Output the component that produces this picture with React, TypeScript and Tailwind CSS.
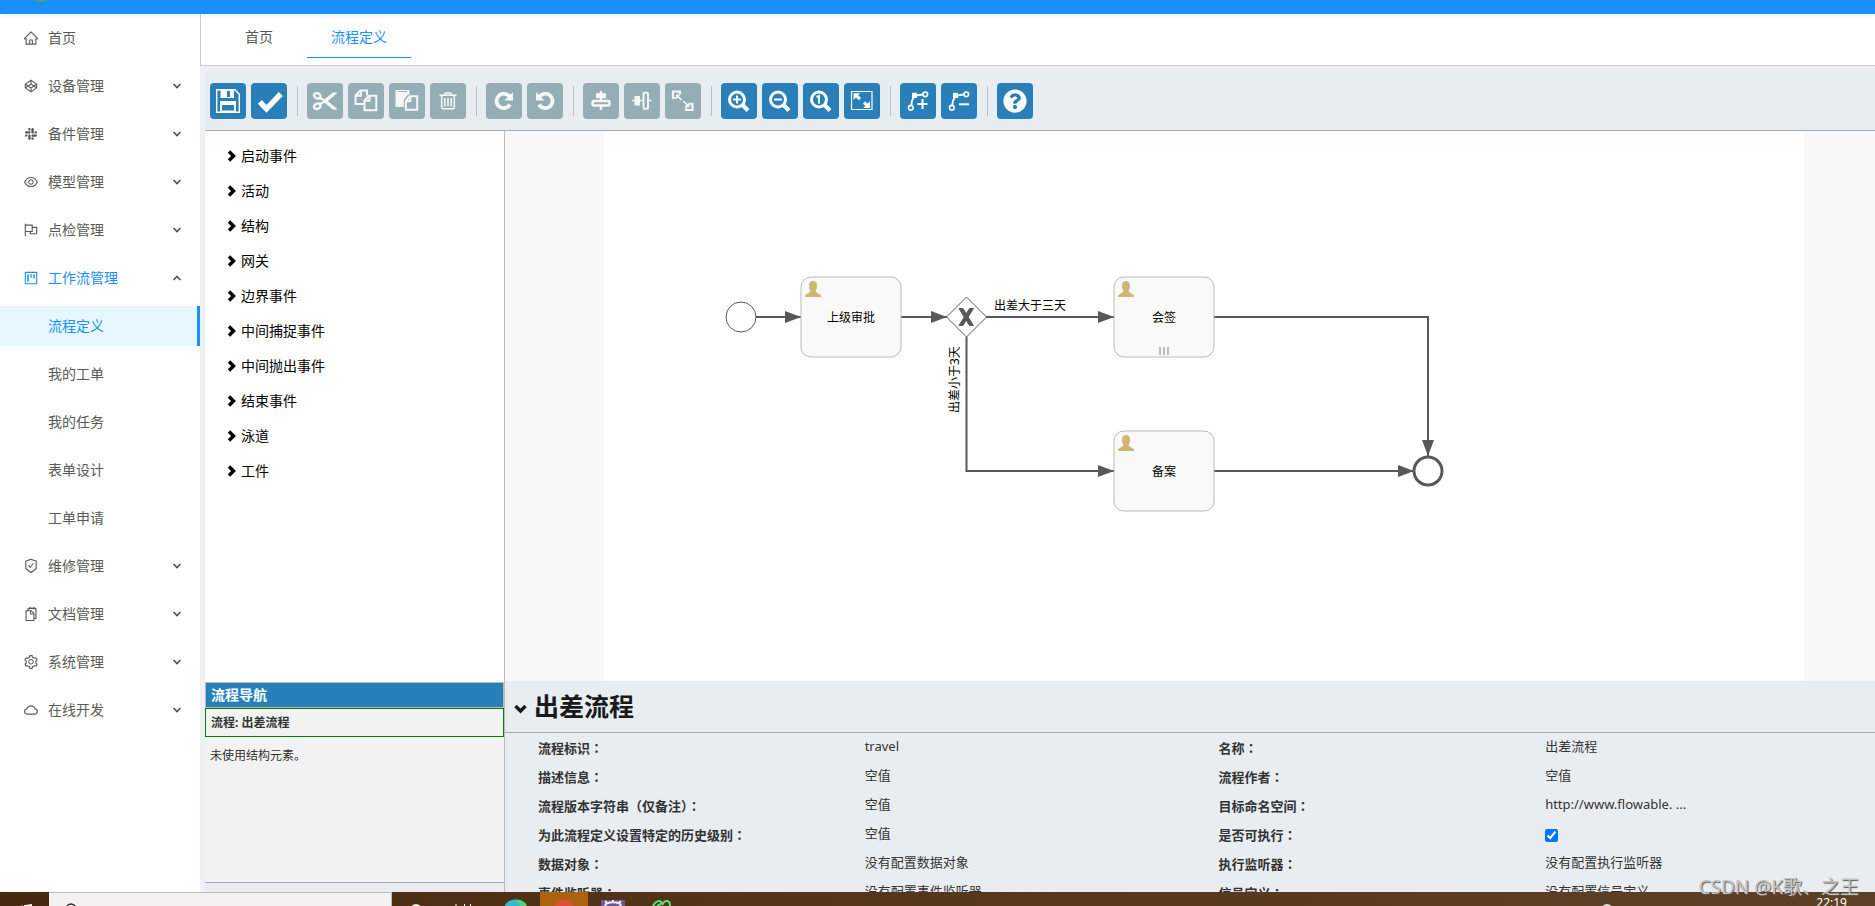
import { ReactNode, useState } from 'react'
import {
  AiOutlineCloud,
  AiOutlineCodepen,
  AiOutlineEye,
  AiOutlineFlag,
  AiOutlineHome,
  AiOutlineProject,
  AiOutlineSafetyCertificate,
  AiOutlineSetting,
  AiOutlineSlack,
  AiOutlineSnippets,
} from 'react-icons/ai'
import { FaQuestionCircle } from 'react-icons/fa'

type MenuItem = {
  label: string
  icon: ReactNode
  children?: string[]
  expandable?: boolean
}

const menu: MenuItem[] = [
  { label: '首页', icon: <AiOutlineHome size={16} /> },
  { label: '设备管理', icon: <AiOutlineCodepen size={16} />, expandable: true },
  { label: '备件管理', icon: <AiOutlineSlack size={16} />, expandable: true },
  { label: '模型管理', icon: <AiOutlineEye size={16} />, expandable: true },
  { label: '点检管理', icon: <AiOutlineFlag size={16} />, expandable: true },
  {
    label: '工作流管理',
    icon: <AiOutlineProject size={16} />,
    expandable: true,
    children: ['流程定义', '我的工单', '我的任务', '表单设计', '工单申请'],
  },
  { label: '维修管理', icon: <AiOutlineSafetyCertificate size={16} />, expandable: true },
  { label: '文档管理', icon: <AiOutlineSnippets size={16} />, expandable: true },
  { label: '系统管理', icon: <AiOutlineSetting size={16} />, expandable: true },
  { label: '在线开发', icon: <AiOutlineCloud size={16} />, expandable: true },
]

const paletteGroups = [
  '启动事件',
  '活动',
  '结构',
  '网关',
  '边界事件',
  '中间捕捉事件',
  '中间抛出事件',
  '结束事件',
  '泳道',
  '工件',
]

const properties = [
  ['流程标识', 'travel'],
  ['名称', '出差流程'],
  ['描述信息', '空值'],
  ['流程作者', '空值'],
  ['流程版本字符串（仅备注）', '空值'],
  ['目标命名空间', 'http://www.flowable. ...'],
  ['为此流程定义设置特定的历史级别', '空值'],
  ['是否可执行', true],
  ['数据对象', '没有配置数据对象'],
  ['执行监听器', '没有配置执行监听器'],
  ['事件监听器', '没有配置事件监听器'],
  ['信号定义', '没有配置信号定义'],
] as const

function MenuArrow({ open }: { open: boolean }) {
  return (
    <svg width="10" height="10" viewBox="0 0 10 10" className="text-[#555]" aria-hidden="true">
      <path d={open ? 'M1.5 7 5 3.5 8.5 7' : 'M1.5 3 5 6.5 8.5 3'} fill="none" stroke="currentColor" strokeWidth="1.7" />
    </svg>
  )
}

function Sidebar() {
  const [selected, setSelected] = useState('流程定义')

  return (
    <nav className="w-[200px] shrink-0 overflow-hidden bg-white pt-1 text-sm text-[#595959]">
      <ul className="flex flex-col gap-2">
        {menu.map(item => (
          <li key={item.label}>
            <button
              className={`flex h-10 w-full items-center gap-[9px] pr-[18px] pl-[23px] text-left ${item.children ? 'text-[#1890ff]' : ''}`}
            >
              {item.icon}
              <span className="flex-1">{item.label}</span>
              {item.expandable && <MenuArrow open={!!item.children} />}
            </button>
            {item.children && (
              <ul className="mt-2 flex flex-col gap-2">
                {item.children.map(child => (
                  <li key={child}>
                    <button
                      onClick={() => setSelected(child)}
                      className={`flex h-10 w-full items-center border-r-3 pl-12 ${
                        selected === child ? 'border-[#1890ff] bg-[#e6f7ff] text-[#1890ff]' : 'border-transparent'
                      }`}
                    >
                      {child}
                    </button>
                  </li>
                ))}
              </ul>
            )}
          </li>
        ))}
      </ul>
    </nav>
  )
}

function Tabs() {
  return (
    <div role="tablist" className="flex h-[52px] shrink-0 gap-2.5 border-b border-l border-[#ccc] bg-white pl-5 text-sm">
      <button role="tab" aria-selected="false" className="h-11 px-6 pt-0.5 text-[#595959]">
        首页
      </button>
      <button role="tab" aria-selected="true" className="h-11 border-b border-[#1890ff] px-6 pt-0.5 text-[#1890ff]">
        流程定义
      </button>
    </div>
  )
}

/* Toolbar drawings, all on a 36px square */

const magnifier = (
  <>
    <circle cx="16" cy="16.5" r="7.5" strokeWidth="3" />
    <path d="m21.5 22 5.5 5.5" strokeWidth="4" />
  </>
)

const redoArrow = (
  <>
    <path d="M23.8 14A7.2 7.2 0 1 0 24 21.5" strokeWidth="3.8" />
    <path d="M27 9v8.5h-8.5z" fill="currentColor" stroke="none" />
  </>
)

const flowLine = (
  <>
    <circle cx="10.8" cy="24.7" r="2.3" />
    <circle cx="25.3" cy="11.3" r="2.3" />
    <path d="m16 12.6 7-1M11.2 22.4c.2-4 1.2-6.600 3.300-9.400" strokeWidth="2" />
    <path d="M12 9.800h5v5.200h-5z" fill="currentColor" stroke="none" />
  </>
)

type Tool = { name: string; icon: ReactNode; disabled?: boolean }

const toolGroups: Tool[][] = [
  [
    {
      name: '保存',
      icon: (
        <>
          <path d="M6.700 6.700H25l4.300 4.600v18H6.700z" strokeWidth="1.400" />
          <path d="M10.500 6.500H24V15H10.500zM17 8v6h3V8zM10 18h16v11H10zM12 22v5.500h12V22z" fill="currentColor" fillRule="evenodd" stroke="none" />
        </>
      ),
    },
    { name: '校验', icon: <path d="m8.800 18.800 6.700 7L29.800 11" strokeWidth="5.400" /> },
  ],
  [
    {
      name: '剪切',
      disabled: true,
      icon: (
        <>
          <ellipse cx="10.300" cy="12.800" rx="3.400" ry="2.600" transform="rotate(25 10.300 12.800)" strokeWidth="2.400" />
          <ellipse cx="10.300" cy="23.200" rx="3.400" ry="2.600" transform="rotate(-25 10.300 23.200)" strokeWidth="2.400" />
          <path d="m12.500 13.600 5 2.600L26 9.500q3-1 4 .8L20.800 18l9.200 7.700q-1 1.800-4 .8l-8.500-6.700-5 2.600-1-2.200 5-2.200-5-2.200z" fill="currentColor" stroke="none" />
        </>
      ),
    },
    {
      name: '复制',
      disabled: true,
      icon: (
        <g strokeWidth="2">
          <path d="M15.500 21H7.500v-8.500L12.500 7.500H19v5M12.800 7.500v5.300H7.500" />
          <path d="M16.500 17.500 21 12.800h7.300v14.400H16.500zM21.500 12.800v5h-5" />
        </g>
      ),
    },
    {
      name: '粘贴',
      disabled: true,
      icon: (
        <>
          <path d="M6.500 7H20.500v4.500H19L14.800 16.500V24H6.500z" fill="currentColor" stroke="none" />
          <path d="M9.500 8.500h8.500" stroke="#95adb4" strokeWidth="1" />
          <path d="M16.800 18 20.800 13.300h7.400v13.400H16.800zM21.300 13.300v5h-4.500" strokeWidth="2" />
        </>
      ),
    },
    {
      name: '删除',
      disabled: true,
      icon: (
        <>
          <path d="M9.500 12.300h17M14.500 12l1-2h5l1 2" />
          <path d="M11.700 12.500v11.300q0 2 2 2h8.600q2 0 2-2V12.500M14.800 15v8.500M18 15v8.500M21.200 15v8.500" />
        </>
      ),
    },
  ],
  [
    { name: '重做', disabled: true, icon: redoArrow },
    { name: '撤销', disabled: true, icon: <g transform="matrix(-1 0 0 1 36 0)">{redoArrow}</g> },
  ],
  [
    {
      name: '垂直对齐',
      disabled: true,
      icon: (
        <>
          <path d="M13 10.200h10V15.200H13z" fill="currentColor" stroke="none" />
          <path d="M18 8v9M18 23v4" strokeWidth="2.400" />
          <rect x="9.500" y="18" width="17" height="4.500" rx="1" strokeWidth="2.400" />
        </>
      ),
    },
    {
      name: '水平对齐',
      disabled: true,
      icon: (
        <>
          <path d="M10.500 13H16v9.500h-5.500z" fill="currentColor" stroke="none" />
          <path d="M8 17.500h10.500M25 17.500h2.500" strokeWidth="1.600" />
          <rect x="19.500" y="9.700" width="4.500" height="16" rx="1" strokeWidth="2" />
        </>
      ),
    },
    {
      name: '相同大小',
      disabled: true,
      icon: (
        <>
          <path d="M10.500 15H8V8.500h7V11M25 20.800h2.500V27h-6.500v-2.500" strokeWidth="2.200" />
          <path d="m12.500 13 4 3.800M18 18l4.500 4" strokeWidth="1.600" />
          <path d="M11 11.500h4.800L11 16.300zM24.500 19v5.300h-5.300z" fill="currentColor" stroke="none" />
        </>
      ),
    },
  ],
  [
    { name: '放大', icon: <>{magnifier}<path d="M12 16.500h8M16 12.500v8" strokeWidth="2" /></> },
    { name: '缩小', icon: <>{magnifier}<path d="M12 16.500h8" strokeWidth="2" /></> },
    { name: '实际大小', icon: <>{magnifier}<path d="m13.500 14 2.500-1v7.500" strokeWidth="2" /></> },
    {
      name: '适应窗口',
      icon: (
        <>
          <path d="M7.500 8.500h20.500v18H7.500z" strokeWidth="1.200" />
          <path d="m12 12.500 4 3.500M20 19.500l4 3.500" strokeWidth="3" />
          <path d="M9.500 10.300h6.700L9.500 17zM26 25v-6.700L19.300 25z" fill="currentColor" stroke="none" />
        </>
      ),
    },
  ],
  [
    { name: '添加拐点', icon: <>{flowLine}<path d="M17.500 21h10M22.500 16v10" strokeWidth="2" /></> },
    { name: '移除拐点', icon: <>{flowLine}<path d="M18 21.300h10" strokeWidth="2" /></> },
  ],
  [{ name: '帮助', icon: <FaQuestionCircle x="6" y="6" size={24} stroke="none" /> }],
]

function Toolbar() {
  return (
    <div className="flex shrink-0 flex-wrap items-center gap-[5px] border-b border-[#a4acb9] bg-[#e8edf1] px-[5px] pt-3 pb-[11px]">
      {toolGroups.map((group, i) => (
        <div key={i} className="flex items-center gap-[5px]">
          {i > 0 && <span className="mr-1 ml-[5px] h-[30px] w-px bg-[#b9c0c9]" />}
          {group.map(tool => (
            <button
              key={tool.name}
              aria-label={tool.name}
              disabled={tool.disabled}
              className={`size-9 rounded ${tool.disabled ? 'bg-[#95adb4] text-white/90' : 'bg-[#2980b9] text-white'}`}
            >
              <svg width="36" height="36" viewBox="0 0 36 36" fill="none" stroke="currentColor" strokeWidth="1.600">
                {tool.icon}
              </svg>
            </button>
          ))}
        </div>
      ))}
    </div>
  )
}

function Palette() {
  return (
    <ul className="min-h-0 flex-1 overflow-hidden bg-white pt-[7px] text-sm text-black">
      {paletteGroups.map(group => (
        <li key={group}>
          <button className="flex h-[35px] w-full items-center gap-1 pl-[22px] text-left">
            <svg width="10" height="12" viewBox="0 0 10 12" aria-hidden="true">
              <path d="m2 1.500 4.500 4.500L2 10.500" fill="none" stroke="currentColor" strokeWidth="3.400" />
            </svg>
            {group}
          </button>
        </li>
      ))}
    </ul>
  )
}

function ProcessNavigator() {
  return (
    <div className="flex h-[210px] shrink-0 flex-col bg-[#e8edf1]">
      <div className="flex flex-1 flex-col border-b border-[#a4acb9] bg-[#f2f2f2]">
        <h2 className="flex h-[26px] items-center border border-[#bbb] bg-[#2980b9] px-[5px] text-sm font-bold text-white">
          流程导航
        </h2>
        <div className="flex h-[29px] items-center border border-[#008000] px-[5px] text-xs font-bold text-[#333]">
          流程: 出差流程
        </div>
        <p className="px-[5px] pt-[11px] text-xs text-[#333]">未使用结构元素。</p>
      </div>
      <div className="h-[9px]" />
    </div>
  )
}

function Task({ x, y, name, multi }: { x: number; y: number; name: string; multi?: boolean }) {
  return (
    <g transform={`translate(${x} ${y})`}>
      <rect width="100" height="80" rx="10" fill="#f9f9f9" stroke="#bbb" />
      <path
        transform="translate(3 3)"
        d="M1 17h16v-1.800l-5.300-3.500V9.900c1.200 0 1.200-2.300 1.200-2.300v-3C12.600.8 9 1 9 1S5.400.8 5.100 4.600v3s0 2.300 1.200 2.300v1.800L1 15.200z"
        fill="#d1b575"
      />
      <text x="50" y="45" textAnchor="middle">
        {name}
      </text>
      {multi && <path d="M46 70v8M50 70v8M54 70v8" stroke="#bbb" strokeWidth="2" />}
    </g>
  )
}

function Canvas() {
  return (
    <div className="min-h-0 flex-1 overflow-hidden bg-[#f8f8f8] pr-[71px] pl-[99px]">
      <div className="h-full bg-white">
        <svg width="1000" height="500" viewBox="0 0 1000 500" fontSize="12" role="img" aria-label="出差流程">
          <defs>
            <marker id="arrow" viewBox="0 0 16 12" refX="16" refY="6" markerWidth="16" markerHeight="12" markerUnits="userSpaceOnUse" orient="auto">
              <path d="M0 0v12l16-6z" fill="#585858" />
            </marker>
          </defs>
          <g fill="none" stroke="#585858" strokeWidth="2">
            <path d="M152 186h45" markerEnd="url(#arrow)" />
            <path d="M297 186h46" markerEnd="url(#arrow)" />
            <path d="M382 186h128" markerEnd="url(#arrow)" />
            <path d="M362.500 206v134H510" markerEnd="url(#arrow)" />
            <path d="M610 186h214v139" markerEnd="url(#arrow)" />
            <path d="M610 340h200" markerEnd="url(#arrow)" />
          </g>
          <g fill="#fff" stroke="#585858">
            <circle cx="137" cy="186" r="15" />
            <path d="m342.500 186 20-20 20 20-20 20z" />
            <circle cx="824" cy="340" r="14" strokeWidth="3" />
          </g>
          <path
            d="M355 177.500h4l10.400 17h-3.900zM355 194.500l10.500-17h3.900l-10.400 17z"
            fill="#585858"
            stroke="#585858"
          />
          <Task x={197} y={146} name="上级审批" />
          <Task x={510} y={146} name="会签" multi />
          <Task x={510} y={300} name="备案" />
          <text x="390" y="179">出差大于三天</text>
          <text transform="translate(355 282) rotate(-90)">出差小于3天</text>
        </svg>
      </div>
    </div>
  )
}

// The TC face centres the full-width colon in its box
function Colon() {
  return <span className="font-['Noto_Sans_CJK_TC',sans-serif] leading-none">：</span>
}

function PropertiesPanel() {
  const [executable, setExecutable] = useState(true)

  return (
    <section className="h-[211px] shrink-0 overflow-hidden bg-[#e8edf1] text-[#333]">
      <div className="flex h-[52px] items-center gap-1.5 border-b border-[#a4acb9] pl-2">
        <svg width="15" height="12" viewBox="0 0 15 12" className="mt-1 text-[#1a1a1a]" aria-hidden="true">
          <path d="m2.500 3 5 5 5-5" fill="none" stroke="currentColor" strokeWidth="3.400" />
        </svg>
        <h1 className="text-[25px] font-bold text-[#1a1a1a]">出差流程</h1>
      </div>
      <dl className="-mr-6 grid grid-cols-[24fr_26fr_24fr_26fr] pt-px pl-[33px] text-[13px] leading-5">
        {properties.map(([label, value]) => (
          <div key={label} className="contents">
            <dt className="h-[29px] pt-1 font-bold whitespace-nowrap">
              {value === true ? <label htmlFor="executable">{label}<Colon /></label> : <>{label}<Colon /></>}
            </dt>
            <dd className="h-[29px] pt-0.5">
              {value === true ? (
                <input
                  id="executable"
                  type="checkbox"
                  checked={executable}
                  onChange={e => setExecutable(e.target.checked)}
                  className="mt-1.5 block size-[13px] accent-[#0075ff]"
                />
              ) : (
                value
              )}
            </dd>
          </div>
        ))}
      </dl>
    </section>
  )
}

function Taskbar() {
  return (
    <footer className="flex h-3.5 shrink-0 items-start overflow-hidden bg-linear-to-r from-[#46290f] via-[#57371c] to-[#5d4026]">
      <svg width="49" height="14" viewBox="0 0 49 14" aria-hidden="true">
        <path d="m17 14.500 6-1v1zM24 13.300l8-1.300v3h-8z" fill="#fff" />
      </svg>
      <div className="h-full w-[343px] border-t border-r border-[#bbb] bg-[#f3f2f1]">
        <svg width="60" height="13" viewBox="0 0 60 13" aria-hidden="true">
          <circle cx="22" cy="15.500" r="4.500" fill="none" stroke="#222" strokeWidth="1.500" />
        </svg>
      </div>
      <svg width="300" height="14" viewBox="0 0 300 14" aria-hidden="true">
        <circle cx="24" cy="18" r="5" fill="none" stroke="#eee" strokeWidth="2" />
        <path d="M64 12v2M72.500 12v2M78.500 12v2" stroke="#fff" />
        <circle cx="123" cy="19" r="11.500" fill="#35b8d8" />
        <path d="M124 7.500c6 0 10 3 11 6.500h-7z" fill="#54d07a" />
        <path d="M148 0h48v14h-48z" fill="#ac6211" />
        <circle cx="172" cy="18" r="10" fill="#e24b3e" />
        <path d="M209 8h24v6h-24z" fill="#6d5593" />
        <path d="M213 14c1-5 15-5 16 0M215 11l-2-2M221 10V8M227 11l2-2" fill="none" stroke="#eee" strokeWidth="2" />
        <path d="M261 14c3-6 8-6 9-3l-5 3M270 13c3-6 8-5 8 1" fill="none" stroke="#5ae07a" strokeWidth="2" />
      </svg>
      <svg width="40" height="14" viewBox="0 0 40 14" className="mr-[175px] ml-auto" aria-hidden="true">
        <circle cx="6" cy="18" r="6" fill="#d6e6f2" />
      </svg>
      <time className="mr-7 pt-[5px] text-xs leading-3 text-white">22:19</time>
    </footer>
  )
}

export default function App() {
  return (
    <div className="relative flex h-screen flex-col overflow-hidden bg-[#eef0f4] font-['Noto_Sans','Noto_Sans_CJK_SC',sans-serif]">
      <header className="z-10 h-3.5 shrink-0 bg-[#1890ff] shadow-[0_1px_4px_rgba(0,21,41,0.08)]">
        <svg width="60" height="14" viewBox="0 0 60 14" aria-hidden="true">
          <ellipse cx="41" cy="-3" rx="9" ry="4.500" fill="#5aa846" />
        </svg>
      </header>
      <div className="flex min-h-0 flex-1">
        <Sidebar />
        <main className="flex min-w-0 flex-1 flex-col">
          <Tabs />
          <div className="flex min-h-0 flex-1 flex-col pt-[5px] pl-[5px]">
            <Toolbar />
            <div className="flex min-h-0 flex-1">
              <aside className="flex w-[300px] shrink-0 flex-col border-r border-[#bbb]">
                <Palette />
                <ProcessNavigator />
              </aside>
              <div className="flex min-w-0 flex-1 flex-col">
                <Canvas />
                <PropertiesPanel />
              </div>
            </div>
          </div>
        </main>
      </div>
      <Taskbar />
      <span className="absolute right-4 bottom-[7px] text-[19px] leading-6 text-[#c4c4c4] [text-shadow:1px_1px_1px_#555]">
        CSDN @K歌、之王
      </span>
    </div>
  )
}
